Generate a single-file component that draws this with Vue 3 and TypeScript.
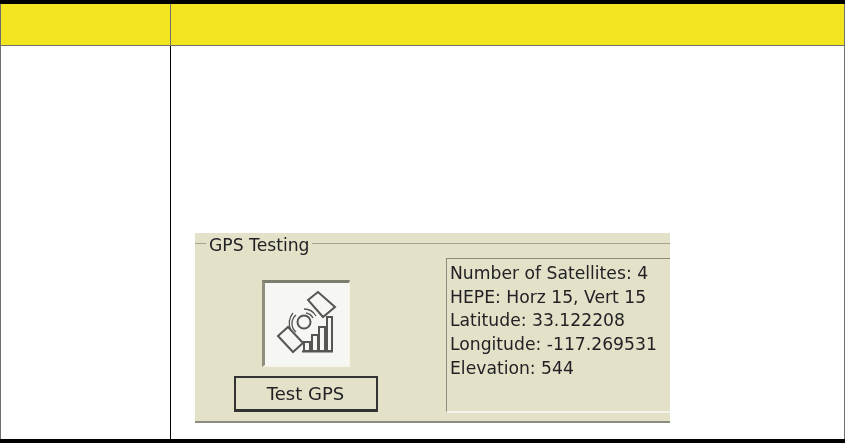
<script setup lang="ts">
const readings: string[] = [
  'Number of Satellites: 4',
  'HEPE: Horz 15, Vert 15',
  'Latitude: 33.122208',
  'Longitude: -117.269531',
  'Elevation: 544',
]
</script>

<template>
  <div class="page">
    <div class="table">
      <div class="head first"></div>
      <div class="head"></div>
      <div class="cell first"></div>
      <div class="cell main">
        <div class="shot">
          <fieldset class="group">
            <legend>GPS Testing</legend>
            <div class="left">
              <div class="iconbox">
                <svg width="88" height="87" viewBox="0 0 88 87" fill="none" stroke="#555553" stroke-width="2">
                  <path d="M46 20 56 12 73 27 61 37Z" />
                  <path d="M16 56 26 47 41 63 31 72Z" />
                  <circle cx="42" cy="42" r="6.5" />
                  <path d="M29 50A15 15 0 0 1 31 33M34 52A11 11 0 0 1 34 35M42 29A14 14 0 0 1 54 36M44 33A10 10 0 0 1 51 38" stroke-width="1.3" />
                  <path d="M42 71V62H48V71ZM50 71V55H56V71ZM57 71V47H63V71ZM65 71V37H70V71ZM40 71.500H71" />
                </svg>
              </div>
              <button class="btn" type="button">Test GPS</button>
            </div>
            <div class="readout">
              <div v-for="r in readings" :key="r">{{ r }}</div>
            </div>
          </fieldset>
        </div>
      </div>
    </div>
  </div>
</template>

<style>
html, body { margin: 0; background: #fff; }
</style>

<style scoped>
.page {
  width: 845px;
  height: 443px;
  box-sizing: border-box;
  border-top: 4px solid #000;
  border-bottom: 4px solid #000;
  overflow: hidden;
}
.table {
  display: grid;
  grid-template-columns: 171px 674px;
  grid-template-rows: 42px 393px;
  height: 435px;
}
.head {
  background: #f2e41f;
  border-bottom: 1px solid #6f6f6f;
  border-right: 1px solid #6f6f6f;
  box-sizing: border-box;
}
.head.first { border-left: 1px solid #6f6f6f; }
.cell { box-sizing: border-box; }
.cell.first {
  border-left: 1px solid #6f6f6f;
  border-right: 1px solid #000;
}
.cell.main {
  border-right: 1px solid #6f6f6f;
  padding: 187px 0 0 24px;
}
.shot {
  width: 475px;
  height: 190px;
  background: #e3e2c9;
  overflow: hidden;
  border-bottom: 2px solid #8c8c7c;
  box-sizing: border-box;
  padding: 0;
  font-family: "DejaVu Sans", sans-serif;
  font-size: 17.2px;
  color: #232125;
}
.group {
  margin: -2px 0 0;
  width: 540px;
  height: 190px;
  box-sizing: border-box;
  border: none;
  border-top: 1px solid #a5a58f;
  padding: 0;
  display: flex;
  filter: blur(0.35px);
}
legend {
  margin-left: 11px;
  padding: 4px 3px 0;
  line-height: 20px;
  font-size: 17.2px;
}
.left {
  width: 251px;
  flex: none;
  display: flex;
  flex-direction: column;
  align-items: center;
  padding-top: 25px;
  padding-right: 30px;
  box-sizing: border-box;
  gap: 9px;
}
.iconbox {
  width: 88px;
  height: 87px;
  box-sizing: border-box;
  background: #f6f6f2;
  border-top: 3px solid #7d7d6e;
  border-left: 3px solid #8e8e7c;
  border-right: 1px solid #f4f4ec;
  border-bottom: 2px solid #f4f4ec;
  position: relative;
}
.iconbox svg { position: absolute; left: -3px; top: -3px; }
.btn {
  width: 144px;
  height: 36px;
  box-sizing: border-box;
  background: #e3e2c9;
  border: 2px solid #333;
  border-bottom-width: 3px;
  font: inherit;
  font-size: 18px;
  color: inherit;
  padding: 0;
}
.readout {
  margin-top: 3px;
  height: 155px;
  flex: 1;
  box-sizing: border-box;
  border-top: 1px solid #8c8c7c;
  border-left: 1px solid #8c8c7c;
  border-bottom: 2px solid #f4f4ec;
  padding: 3px 0 0 3px;
  line-height: 23.7px;
  white-space: nowrap;
}
</style>
